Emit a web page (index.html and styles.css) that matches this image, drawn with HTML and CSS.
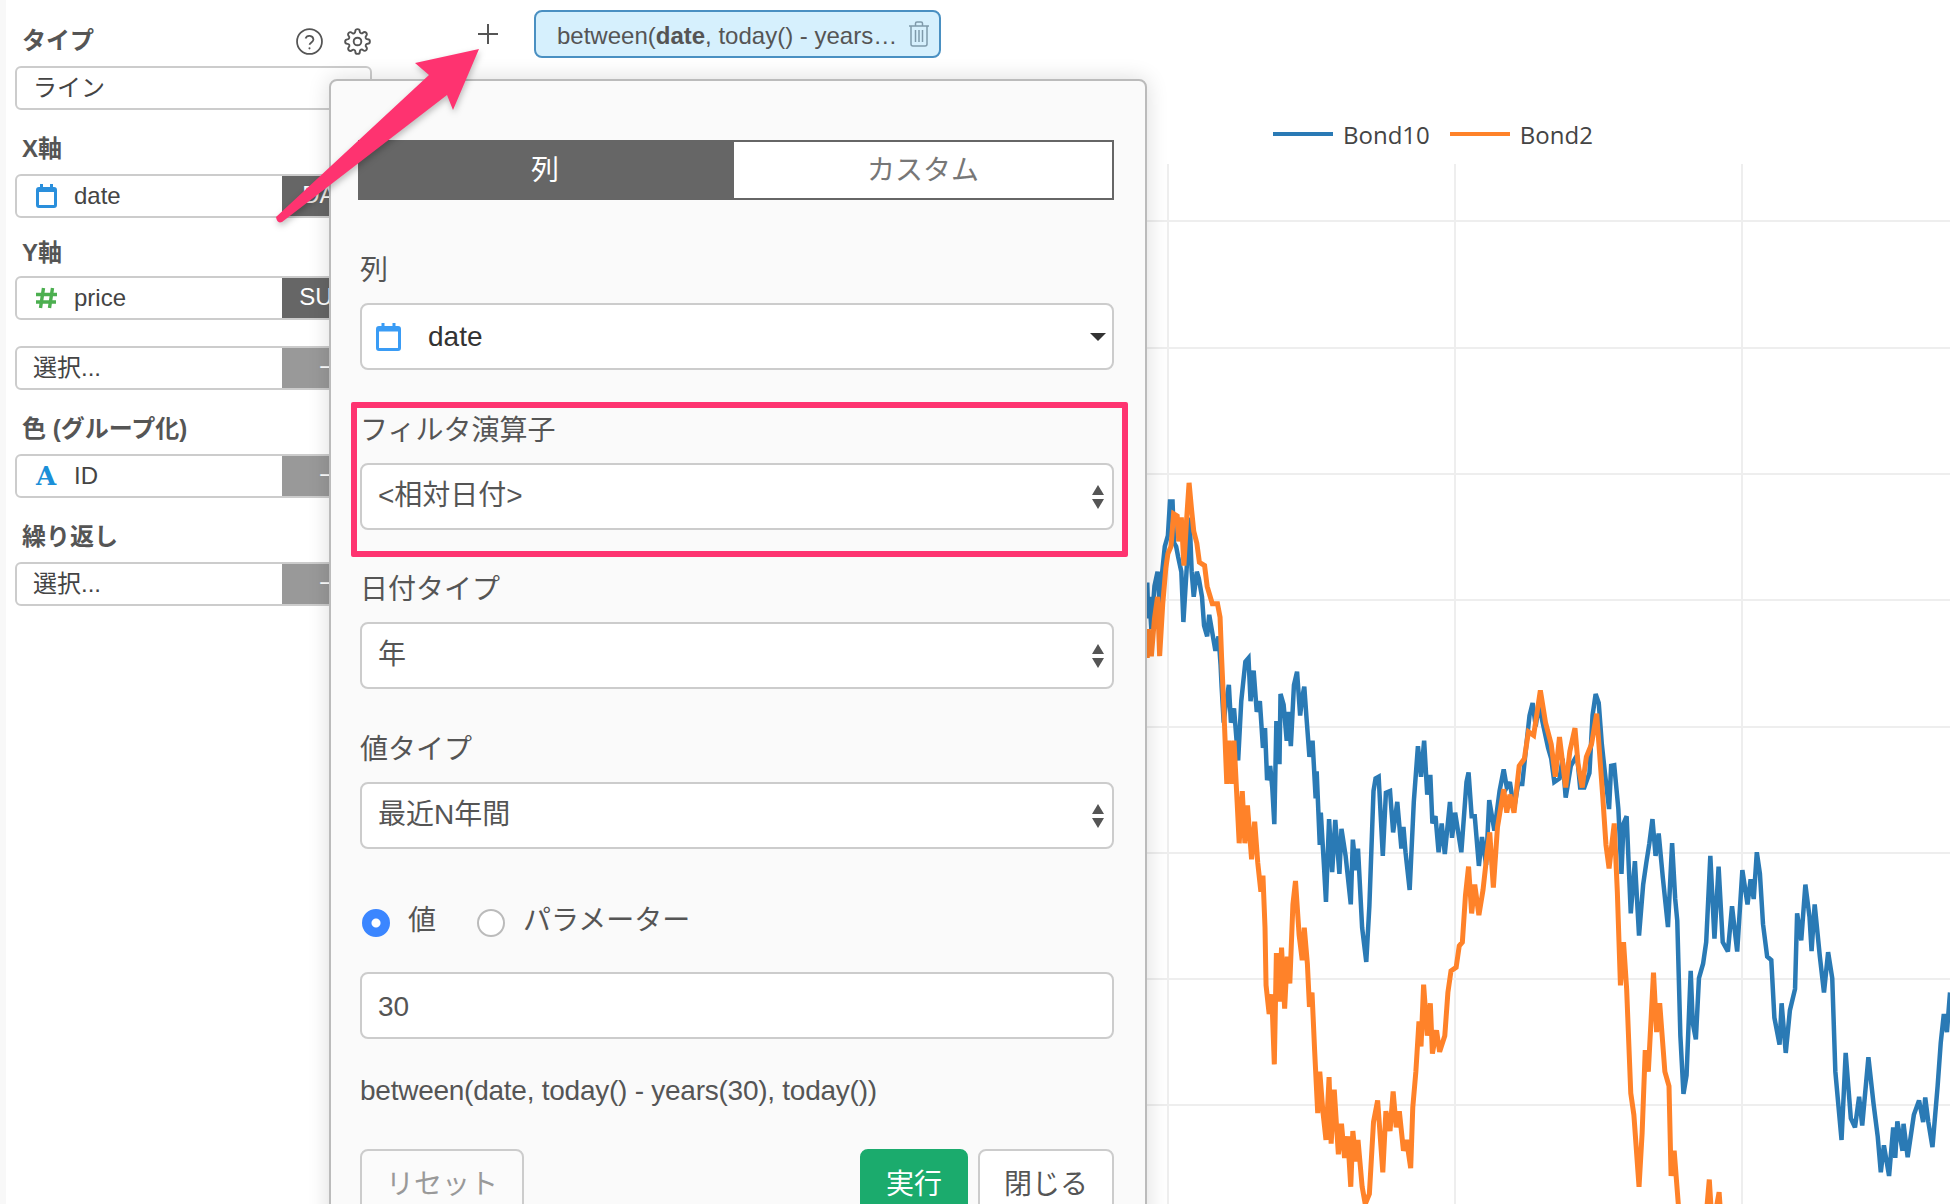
FILE: index.html
```html
<!DOCTYPE html>
<html lang="ja">
<head>
  <meta charset="UTF-8">
  <title>Chart filter</title>
  <link rel="stylesheet" href="styles.css">
</head>
<body>
  <div class="app">

    <!-- Left column -->
    <aside class="sidebar">
      <div class="field">
        <div class="field-label label-row">
          <span>タイプ</span>
          <span class="label-icons">
            <svg class="tool-icon" viewBox="0 0 26 26"><circle cx="13" cy="13" r="12"/><path d="M9.2 10.2a3.9 3.9 0 0 1 7.6.9c0 2.6-3.7 2.9-3.7 5"/><circle class="dot" cx="13" cy="19.6" r="1"/></svg>
            <svg class="tool-icon" viewBox="0 0 24 24"><circle cx="12" cy="12" r="3.4"/><path d="M19.4 15a1.65 1.65 0 0 0 .33 1.82l.06.06a2 2 0 0 1 0 2.83 2 2 0 0 1-2.83 0l-.06-.06a1.65 1.65 0 0 0-1.82-.33 1.65 1.65 0 0 0-1 1.51V21a2 2 0 0 1-2 2 2 2 0 0 1-2-2v-.09A1.65 1.65 0 0 0 9 19.4a1.65 1.65 0 0 0-1.82.33l-.06.06a2 2 0 0 1-2.83 0 2 2 0 0 1 0-2.83l.06-.06a1.65 1.65 0 0 0 .33-1.82 1.65 1.65 0 0 0-1.51-1H3a2 2 0 0 1-2-2 2 2 0 0 1 2-2h.09A1.65 1.65 0 0 0 4.6 9a1.65 1.65 0 0 0-.33-1.82l-.06-.06a2 2 0 0 1 0-2.83 2 2 0 0 1 2.83 0l.06.06a1.65 1.65 0 0 0 1.82.33H9a1.65 1.65 0 0 0 1-1.51V3a2 2 0 0 1 2-2 2 2 0 0 1 2 2v.09a1.65 1.65 0 0 0 1 1.51 1.65 1.65 0 0 0 1.82-.33l.06-.06a2 2 0 0 1 2.83 0 2 2 0 0 1 0 2.83l-.06.06a1.65 1.65 0 0 0-.33 1.82V9a1.65 1.65 0 0 0 1.51 1H21a2 2 0 0 1 2 2 2 2 0 0 1-2 2h-.09a1.65 1.65 0 0 0-1.51 1z"/></svg>
          </span>
        </div>
        <div class="box"><span class="box-text box-ja">ライン</span></div>
      </div>

      <div class="field field-x">
        <div class="field-label">X軸</div>
        <div class="box">
          <svg class="type-icon cal-icon" viewBox="0 0 21 24"><path d="M5.5 0v5M15.5 0v5"/><rect x="1.5" y="4.5" width="18" height="18" rx="1.5"/><path class="thick" d="M1.5 6h18"/></svg>
          <span class="box-text">date</span>
          <span class="badge">DAY</span>
        </div>
      </div>

      <div class="field field-y">
        <div class="field-label">Y軸</div>
        <div class="box">
          <svg class="type-icon hash-icon" viewBox="0 0 21 22"><path d="M7.5 1 4.5 21M16.5 1l-3 20M0 7.5h21M0 15h20"/></svg>
          <span class="box-text">price</span>
          <span class="badge">SUM</span>
        </div>
      </div>

      <div class="field">
        <div class="box"><span class="box-text box-ja">選択...</span><span class="badge badge-off">−</span></div>
      </div>

      <div class="field">
        <div class="field-label">色 (グループ化)</div>
        <div class="box">
          <span class="type-icon letter-icon">A</span>
          <span class="box-text">ID</span>
          <span class="badge badge-off">−</span>
        </div>
      </div>

      <div class="field">
        <div class="field-label">繰り返し</div>
        <div class="box"><span class="box-text box-ja">選択...</span><span class="badge badge-off">−</span></div>
      </div>
    </aside>

    <!-- Chart side -->
    <main class="chart-side">
      <div class="filter-bar">
        <svg class="add-icon" viewBox="0 0 20 20"><path d="M10 0v20M0 10h20"/></svg>
        <div class="chip">
          <span class="chip-text">between(<b>date</b>, today() - years…</span>
          <svg class="trash-icon" viewBox="0 0 22 26"><path d="M1 5h20M7.5 5V2.5q0-1.500 1.500-1.500h4q1.500 0 1.500 1.500V5M3 5v18q0 2 2 2h12q2 0 2-2V5M7.500 9v12M11 9v12M14.500 9v12"/></svg>
        </div>
      </div>

      <div class="legend">
        <span class="legend-line line-blue"></span><span class="legend-name">Bond10</span>
        <span class="legend-line line-orange"></span><span class="legend-name">Bond2</span>
      </div>

      <svg class="plot" viewBox="380 164 1570 1040">
        <g class="grid">
          <path d="M1168 164V1204M1455 164V1204M1742 164V1204"/>
          <path d="M380 221H1950M380 348H1950M380 474H1950M380 600H1950M380 727H1950M380 853H1950M380 979H1950M380 1105H1950"/>
        </g>
        <g transform="translate(1140 640) scale(.5166 .3597)">
          <polyline class="series series-blue" points="14,-160 16,-60 18,-120 22,-30 28,-150 34,-190 38,-100 43,-190 48,-260 54,-290 58,-385 63,-385 66,-270 70,-260 74,-230 80,-190 84,-50 90,-190 96,-340 100,-190 104,-120 110,-190 114,-170 120,-120 124,-40 130,-10 134,-70 140,-20 146,30 152,-10 156,70 158,130 162,230 166,180 172,125 176,230 182,190 190,335 196,170 204,60 210,50 214,170 220,85 226,200 232,170 238,300 242,245 246,390 252,350 256,410 260,512 264,225 270,345 272,150 278,180 284,280 287,200 292,295 298,125 304,88 310,210 314,160 318,130 322,210 328,325 334,280 340,440 342,365 348,570 350,480 356,625 360,728 366,498 372,645 378,500 386,650 390,525 398,600 408,735 412,555 418,640 422,580 430,800 438,895 444,740 452,420 456,385 462,380 470,600 476,425 484,420 490,535 498,450 506,580 510,520 514,590 522,695 530,450 538,295 544,380 550,280 556,430 562,375 566,510 572,490 578,590 584,510 590,595 600,450 604,550 610,480 622,590 632,395 636,368 642,490 648,490 656,628 662,548 670,625 676,445 686,530 696,420 704,360 710,410 716,395 724,470 732,400 740,400 748,290 754,210 760,175 766,240 772,180 790,300 796,330 802,395 812,385 818,330 824,438 834,350 846,320 852,410 860,410 870,370 876,210 882,150 888,175 894,290 900,370 908,470 912,350 918,348 926,470 932,650 936,510 942,490 950,760 958,615 966,822 974,680 980,620 986,565 992,498 998,600 1004,538 1012,660 1022,798 1030,565 1036,720 1040,780 1046,1100 1052,1262 1058,1210 1066,920 1070,1065 1076,1110 1082,940 1090,900 1096,840 1104,600 1112,830 1120,630 1128,840 1138,866 1146,740 1156,866 1166,640 1176,735 1182,665 1188,720 1194,590 1200,650 1206,790 1214,880 1222,890 1228,1050 1238,1125 1242,1010 1250,1148 1258,1030 1268,970 1272,760 1280,835 1288,680 1296,770 1300,865 1306,735 1316,880 1324,980 1332,868 1340,940 1346,1200 1358,1390 1366,1148 1376,1330 1384,1355 1392,1270 1398,1350 1410,1160 1420,1290 1428,1380 1434,1480 1440,1405 1450,1490 1458,1355 1462,1440 1466,1338 1476,1420 1478,1345 1486,1438 1498,1320 1508,1280 1516,1340 1520,1272 1526,1340 1534,1410 1544,1240 1550,1120 1556,1040 1562,1090 1568,980"/>
          <polyline class="series series-orange" points="14,50 16,-30 22,45 28,-60 34,-120 38,45 44,-100 50,-200 54,-240 60,-260 65,-351 72,-345 75,-274 80,-341 85,-207 90,-330 95,-437 100,-360 104,-303 110,-269 115,-216 125,-207 130,-149 140,-101 150,-101 155,-63 158,50 162,180 168,400 172,280 178,400 182,280 188,450 192,565 198,420 203,565 208,460 216,610 222,505 228,620 234,700 238,655 242,800 244,960 250,1040 255,985 260,1180 264,870 270,1005 274,855 280,1025 285,880 290,955 296,735 301,670 308,820 314,890 318,800 324,900 328,1020 333,980 338,1140 344,1315 348,1200 354,1310 360,1390 366,1215 370,1400 376,1250 384,1430 390,1345 396,1440 402,1380 408,1520 412,1365 418,1450 422,1390 430,1520 436,1568 444,1540 452,1340 460,1280 470,1480 476,1310 484,1365 490,1255 496,1355 502,1310 510,1420 516,1390 524,1468 528,1300 534,1200 540,1060 544,1130 549,958 556,1100 562,1010 566,1150 574,1085 580,1145 590,1100 596,980 602,920 612,910 618,850 624,840 630,710 636,630 642,760 648,680 656,765 664,695 672,590 677,535 684,688 692,520 704,415 710,480 716,430 724,480 734,350 744,330 752,255 762,265 775,140 785,230 796,290 804,380 812,270 824,410 832,310 842,245 848,345 856,410 864,325 874,290 884,205 896,440 902,570 908,635 918,510 924,700 930,960 936,840 942,970 950,1260 956,1320 966,1520 972,1370 978,1140 984,1200 994,925 1000,1090 1006,1010 1016,1200 1024,1240 1028,1490 1034,1420 1042,1568 1044,1620 1090,1700 1102,1500 1108,1640 1121,1535 1126,1640"/>
        </g>
      </svg>
    </main>
  </div>

  <!-- Filter popover -->
  <section class="popover">
    <div class="tabs">
      <div class="tab tab-active">列</div>
      <div class="tab">カスタム</div>
    </div>

    <div class="form-group group-first">
      <div class="form-label">列</div>
      <div class="select">
        <svg class="select-icon cal-icon cal-light" viewBox="0 0 25 28"><path d="M7 0v5M18 0v5"/><rect x="1.500" y="4.500" width="22" height="22" rx="1.500"/><path class="thick" d="M1.500 6.500h22"/></svg>
        <span class="select-value">date</span>
        <span class="caret"></span>
      </div>
    </div>

    <div class="form-group group-marked">
      <div class="form-label">フィルタ演算子</div>
      <div class="select"><span class="select-text">&lt;相対日付&gt;</span><span class="updown"></span></div>
      <div class="marker"></div>
    </div>

    <div class="form-group group-date">
      <div class="form-label">日付タイプ</div>
      <div class="select"><span class="select-text">年</span><span class="updown"></span></div>
    </div>

    <div class="form-group">
      <div class="form-label">値タイプ</div>
      <div class="select"><span class="select-text">最近N年間</span><span class="updown"></span></div>
    </div>

    <div class="radios">
      <label class="radio-item"><input class="radio" type="radio" name="kind" checked>値</label>
      <label class="radio-item"><input class="radio" type="radio" name="kind">パラメーター</label>
    </div>

    <input class="text-input" type="text" value="30">

    <p class="expression">between(date, today() - years(30), today())</p>

    <div class="actions">
      <button class="btn btn-muted">リセット</button>
      <button class="btn btn-run">実行</button>
      <button class="btn">閉じる</button>
    </div>
  </section>

  <!-- Annotation arrow -->
  <svg class="arrow" viewBox="0 0 500 240"><path d="M276 217 429 75 415 63 479 49 453 110 447 95 282 222Q277 224 276 217Z"/></svg>
</body>
</html>
```

FILE: styles.css
```css
* {
  margin: 0;
  padding: 0;
  box-sizing: border-box;
}
html, body {
  height: 100%;
  overflow: hidden;
}
body {
  position: relative;
  background-color: white;
  color: #555;
  font-family: "Liberation Sans", "Noto Sans CJK JP", sans-serif;
}
.app {
  display: flex;
  height: 100vh;
}

/* Sidebar */
.sidebar {
  flex: none;
  width: 380px;
  padding: 24px 8px 0 9px;
  border-left: 6px solid #f8f8f8;
}
.field {
  margin-bottom: 22px;
}
.field-x {
  margin-bottom: 18px;
}
.field-y {
  margin-bottom: 26px;
}
.field-y .field-label {
  margin-bottom: 6px;
}
.field-label {
  height: 34px;
  margin-bottom: 8px;
  padding-left: 7px;
  font-size: 24px;
  font-weight: bold;
  line-height: 34px;
  color: #555;
}
.label-row {
  display: flex;
  justify-content: space-between;
  align-items: center;
}
.label-icons {
  display: flex;
  gap: 21px;
  margin-right: 1px;
}
.tool-icon {
  width: 27px;
  height: 27px;
  fill: none;
  stroke: #555;
  stroke-width: 1.7;
}
.tool-icon .dot {
  fill: #555;
  stroke: none;
}
.box {
  display: flex;
  align-items: center;
  height: 44px;
  border: 2px solid #ccc;
  border-radius: 6px;
  background-color: white;
  overflow: hidden;
  font-size: 24px;
  color: #444;
}
.box-text {
  padding-left: 16px;
}
.box-ja {
  padding-bottom: 6px;
}
.type-icon {
  flex: none;
  width: 21px;
  height: 24px;
  margin-left: 19px;
  margin-right: 1px;
}
.cal-icon {
  fill: none;
  stroke: #2a8fdc;
  stroke-width: 3;
}
.cal-icon .thick {
  stroke-width: 4;
}
.cal-light {
  stroke: #3a9cf5;
}
.hash-icon {
  height: 22px;
  fill: none;
  stroke: #4caf50;
  stroke-width: 3.4;
}
.letter-icon {
  font-family: "DejaVu Serif", serif;
  font-size: 26px;
  font-weight: bold;
  line-height: 24px;
  color: #1b8fd8;
}
.badge {
  flex: none;
  width: 88px;
  height: 44px;
  margin-left: auto;
  background-color: #666;
  color: white;
  line-height: 42px;
  text-align: center;
}
.badge-off {
  background-color: #999;
}

/* Filter bar and legend */
.chart-side {
  flex: 1;
  display: flex;
  flex-direction: column;
  min-width: 0;
}
.filter-bar {
  display: flex;
  align-items: center;
  height: 48px;
  margin-top: 10px;
  padding-left: 98px;
}
.add-icon {
  width: 20px;
  height: 20px;
  fill: none;
  stroke: #555;
  stroke-width: 2;
}
.chip {
  display: flex;
  align-items: center;
  justify-content: space-between;
  width: 407px;
  height: 48px;
  margin-left: 36px;
  padding: 0 9px 0 21px;
  border: 2px solid #4a90c2;
  border-radius: 8px;
  background-color: #d6f0fd;
  font-size: 24px;
  white-space: nowrap;
}
.chip-text {
  padding-top: 3px;
}
.trash-icon {
  width: 22px;
  height: 26px;
  fill: none;
  stroke: #7f9aab;
  stroke-width: 1.500;
}
.legend {
  display: flex;
  align-items: center;
  height: 30px;
  margin: 61px 0 15px 893px;
  font-family: "Open Sans", sans-serif;
  font-size: 24px;
  color: #444;
}
.legend-line {
  width: 60px;
  height: 4px;
}
.line-blue {
  background-color: #2a7ab5;
}
.line-orange {
  background-color: #ff8229;
}
.legend-name {
  margin: 0 20px 0 10px;
}
.plot {
  display: block;
  width: 1570px;
  height: 1040px;
  flex: none;
}
.grid path {
  fill: none;
  stroke: #eeeeee;
  stroke-width: 2;
}
.series {
  fill: none;
  stroke-linejoin: miter;
  stroke-miterlimit: 3;
  vector-effect: non-scaling-stroke;
}
.series-blue {
  stroke: #2a7ab5;
  stroke-width: 4.5;
}
.series-orange {
  stroke: #ff8229;
  stroke-width: 5;
}

/* Popover */
.popover {
  position: absolute;
  top: 79px;
  left: 329px;
  width: 818px;
  height: 1200px;
  padding: 59px 31px 0 27px;
  border: 2px solid #bbb;
  border-radius: 8px 8px 0 0;
  background-color: #fafafa;
  box-shadow: 0 0 22px rgba(0, 0, 0, 0.14);
  font-size: 28px;
}
.tabs {
  display: flex;
  height: 60px;
}
.tab {
  flex: 1;
  border: 2px solid #666;
  background-color: white;
  color: #777;
  line-height: 58px;
  text-align: center;
}
.tab-active {
  flex: none;
  width: 374px;
  background-color: #666;
  color: white;
}
.form-group {
  margin: 41px 0 0 2px;
}
.group-first {
  margin-top: 51px;
}
.group-marked {
  position: relative;
}
.group-date {
  margin-top: 40px;
}
.marker {
  position: absolute;
  top: -9px;
  left: -9px;
  right: -14px;
  height: 155px;
  border: 6px solid #fe3370;
  border-radius: 2px;
}
.form-label {
  height: 36px;
  margin-bottom: 16px;
  padding-top: 2px;
  line-height: 36px;
}
.select {
  display: flex;
  align-items: center;
  height: 67px;
  padding: 0 8px 0 16px;
  border: 2px solid #ccc;
  border-radius: 8px;
  background-color: white;
}
.select-text {
  padding-bottom: 8px;
}
.select-icon {
  flex: none;
  width: 25px;
  height: 28px;
  margin-left: -2px;
  margin-right: 27px;
}
.select-value {
  padding-top: 1px;
  color: #333;
}
.caret {
  width: 0;
  height: 0;
  margin-left: auto;
  margin-right: -2px;
  border-style: solid;
  border-width: 8px 8px 0;
  border-color: #333 transparent transparent;
}
.updown {
  position: relative;
  width: 12px;
  height: 24px;
  margin-left: auto;
}
.updown::before, .updown::after {
  content: "";
  position: absolute;
  left: 0;
  border-style: solid;
  border-color: transparent;
}
.updown::before {
  top: 0;
  border-width: 0 6px 10px;
  border-bottom-color: #555;
}
.updown::after {
  bottom: 0;
  border-width: 10px 6px 0;
  border-top-color: #555;
}
.radios {
  display: flex;
  gap: 41px;
  height: 28px;
  margin: 60px 0 0 4px;
}
.radio-item {
  display: flex;
  align-items: flex-start;
  gap: 18px;
  line-height: 24px;
}
.radio {
  appearance: none;
  width: 28px;
  height: 28px;
  border: 2px solid #bbb;
  border-radius: 50%;
  background-color: white;
}
.radio:checked {
  border-color: #3b86ff;
  background: radial-gradient(circle, white 4px, #3b86ff 5px);
}
.text-input {
  display: block;
  width: 754px;
  height: 67px;
  margin: 35px 0 0 2px;
  padding: 2px 16px 0;
  border: 2px solid #ccc;
  border-radius: 8px;
  background-color: white;
  color: #555;
  font: inherit;
}
.expression {
  height: 36px;
  margin: 34px 0 0 2px;
  letter-spacing: -0.25px;
  line-height: 36px;
}
.actions {
  display: flex;
  gap: 10px;
  margin: 40px 0 0 2px;
}
.btn {
  height: 66px;
  padding: 0 24px;
  border: 2px solid #ccc;
  border-radius: 8px;
  background-color: white;
  color: #555;
  font: inherit;
}
.btn-muted {
  margin-right: auto;
  color: #999;
  background-color: #fbfbfb;
}
.btn-run {
  border-color: #1bab6d;
  background-color: #1bab6d;
  color: white;
}

/* Arrow over everything */
.arrow {
  position: absolute;
  top: 0;
  left: 0;
  width: 500px;
  height: 240px;
  fill: #fe3370;
  filter: drop-shadow(1px 3px 3px rgba(0, 0, 0, 0.25));
}
```
